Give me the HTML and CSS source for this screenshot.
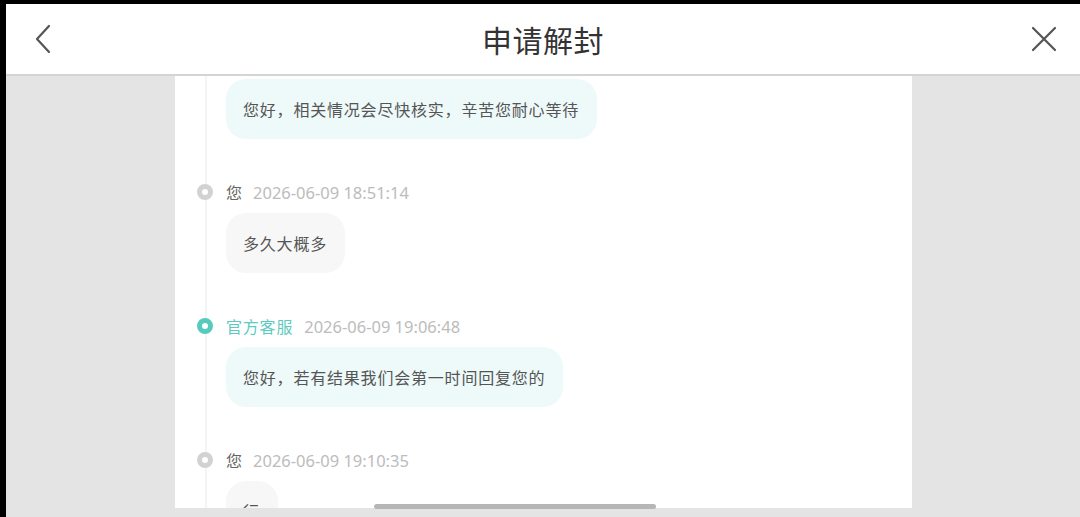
FILE: index.html
```html
<!DOCTYPE html>
<html>
<head>
	<meta charset="utf-8">
	<title>申请解封</title>
	<link rel="stylesheet" href="styles.css">
</head>
<body>
<div class="screen">
	<div class="topbar">
		<span class="nav-btn">
			<svg width="24" height="30" viewBox="0 0 24 30"><path d="M17 2 L5 15 L17 28" fill="none" stroke="#555" stroke-width="2.2" stroke-linecap="round" stroke-linejoin="round"/></svg>
		</span>
		<h1 class="title">申请解封</h1>
		<span class="nav-btn">
			<svg width="28" height="28" viewBox="0 0 28 28"><path d="M3 3 L25 25 M25 3 L3 25" fill="none" stroke="#555" stroke-width="2.2" stroke-linecap="round"/></svg>
		</span>
	</div>

	<div class="main">
		<div class="panel">
			<div class="log">
				<div class="entry">
					<div class="bubble reply">您好，相关情况会尽快核实，辛苦您耐心等待</div>
				</div>
				<div class="entry">
					<div class="meta"><i class="dot"></i><span class="who">您</span><span class="time">2026-06-09 18:51:14</span></div>
					<div class="bubble">多久大概多</div>
				</div>
				<div class="entry">
					<div class="meta"><i class="dot staff"></i><span class="who staff-name">官方客服</span><span class="time">2026-06-09 19:06:48</span></div>
					<div class="bubble reply">您好，若有结果我们会第一时间回复您的</div>
				</div>
				<div class="entry">
					<div class="meta"><i class="dot"></i><span class="who">您</span><span class="time">2026-06-09 19:10:35</span></div>
					<div class="bubble">行</div>
				</div>
			</div>
		</div>
		<div class="scrollbar"></div>
	</div>
</div>
</body>
</html>
```

FILE: styles.css
```css
html, body{
	margin:0;
	height:100%;
	background:#000;
	overflow:hidden;
}
.screen{
	margin:4px 0 0 6px;
	height:513px;
	display:flex;
	flex-direction:column;
	font-family:"Noto Sans","Noto Sans CJK SC",sans-serif;
}
.topbar{
	height:70px;
	flex:none;
	background:#fff;
	border-bottom:2px solid #d4d4d4;
	display:flex;
	align-items:center;
	justify-content:space-between;
	padding:0 22px 0 26px;
}
.nav-btn{
	display:flex;
	align-items:center;
}
.title{
	margin:0;
	font-family:"Noto Sans CJK SC",sans-serif;
	font-size:30px;
	font-weight:400;
	color:#333;
	letter-spacing:0.5px;
}
.main{
	flex:1;
	min-height:0;
	position:relative;
	background:#e4e4e4;
	padding:0 168px 9px 169px;
	display:flex;
}
.panel{
	width:737px;
	background:#fff;
	overflow:hidden;
}
.log{
	margin-left:30px;
	padding:3px 0 0 19px;
	border-left:2px solid #f4f4f4;
}
.entry{
	margin-bottom:42px;
}
.meta{
	position:relative;
	height:22px;
	display:flex;
	align-items:center;
	margin-bottom:10px;
	font-size:16.5px;
}
.dot{
	position:absolute;
	left:-29px;
	top:3px;
	width:6px;
	height:6px;
	border-radius:50%;
	background:#fff;
	border:5px solid #d2d2d2;
}
.dot.staff{
	border-color:#56cbbd;
}
.who{
	font-family:"Noto Sans CJK SC",sans-serif;
	font-size:16px;
	color:#666;
	margin-right:11px;
}
.staff-name{
	color:#5ccbbf;
	letter-spacing:0.8px;
}
.time{
	color:#bcbcbc;
}
.bubble{
	display:inline-block;
	padding:18px 18px 18px 17px;
	line-height:24px;
	font-family:"Noto Sans CJK SC",sans-serif;
	font-size:16px;
	letter-spacing:0.8px;
	color:#555;
	background:#f7f7f7;
	border-radius:20px;
}
.bubble.reply{
	background:#eef9fa;
}
.scrollbar{
	position:absolute;
	left:368px;
	bottom:8px;
	width:282px;
	height:5px;
	border-radius:3px;
	background:#b6b6b6;
}
```
